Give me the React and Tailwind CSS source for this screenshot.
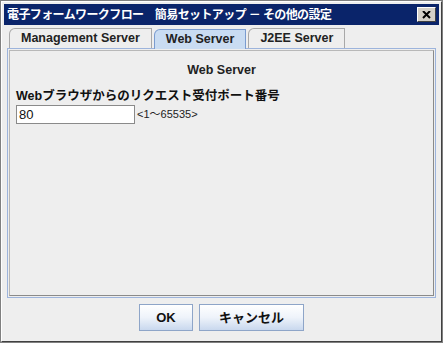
import React from 'react';

const jp = { fontFamily: '"Liberation Sans", "Noto Sans CJK JP", sans-serif' };

function Tab({ label, active }) {
  return (
    <div
      className={
        'h-[20px] px-[11px] flex items-center rounded-tl-[6px] border border-b-0 text-[12.5px] font-bold text-[#222] ' +
        (active ? 'bg-[#c9dcf2] border-[#7a9cd0] -mb-px relative z-10' : 'bg-[#eeeeee] border-[#a8a8a8] mt-[2px]')
      }
    >
      {label}
    </div>
  );
}

function Button({ children, w }) {
  return (
    <button
      className={'h-[27px] border border-[#8ea5c8] bg-gradient-to-b from-white via-[#eef3fa] to-[#c9d8ee] text-[13px] font-bold text-[#111] ' + w}
    >
      {children}
    </button>
  );
}

export default function App() {
  return (
    <div className="w-[443px] h-[343px] bg-[#808080] p-px" style={jp}>
      <div className="w-full h-full bg-[#eeeeee] border-t border-l border-white border-r border-b border-r-[#404040] border-b-[#404040] p-[2px] flex flex-col">
        {/* title bar */}
        <div className="h-[21px] bg-[#0a246a] flex items-center justify-between pl-[3px] pr-[3px]">
          <span className="text-white text-[12px] font-bold tracking-[-0.6px] leading-none">
            電子フォームワークフロー　簡易セットアップ － その他の設定
          </span>
          <div className="w-[19px] h-[15px] bg-[#d4d0c8] border border-t-white border-l-white border-r-[#404040] border-b-[#404040] flex items-center justify-center">
            <svg width="9" height="8" viewBox="0 0 9 8">
              <path d="M1 0 L8 7 M8 0 L1 7" stroke="#000" strokeWidth="2" />
            </svg>
          </div>
        </div>

        {/* tabs */}
        <div className="flex items-end gap-[2px] pl-[5px] mt-[1px]">
          <Tab label="Management Server" />
          <Tab label="Web Server" active />
          <Tab label="J2EE Server" />
        </div>

        {/* panel */}
        <div className="mx-[3px] h-[250px] border border-[#9db4dc] p-[1px]">
          <div className="h-full border border-[#b8b8b8] border-r-[#8a8a8a] border-b-[#8a8a8a] bg-[#eeeeee] px-[6px] pt-[10px]">
            <div className="text-center text-[12.5px] font-bold text-[#222]">Web Server</div>
            <div className="mt-[8px] text-[12.5px] font-bold text-[#111] leading-[16px]">
              Webブラウザからのリクエスト受付ポート番号
            </div>
            <div className="flex items-center mt-[1px]">
              <div className="w-[119px] h-[19px] bg-white border border-[#8a8a8a] text-[13px] pl-[2px] flex items-center text-[#111]">
                80
              </div>
              <span className="text-[11px] ml-[2px] text-[#222]">&lt;1〜65535&gt;</span>
            </div>
          </div>
        </div>

        {/* buttons */}
        <div className="flex justify-center gap-[6px] mt-[6px]">
          <Button w="w-[54px]">OK</Button>
          <Button w="w-[105px]">キャンセル</Button>
        </div>
      </div>
    </div>
  );
}
